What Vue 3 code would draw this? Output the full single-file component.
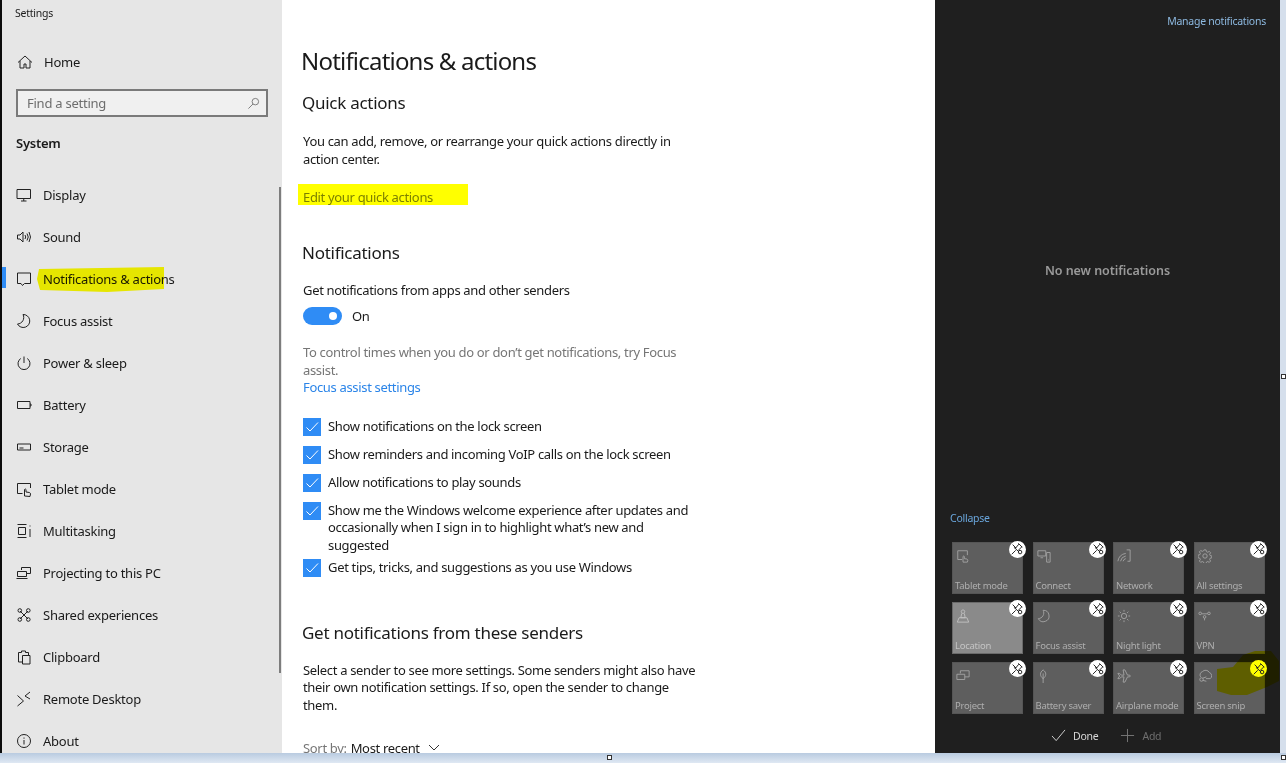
<script setup>
const navItems = [
  { label: 'Display', icon: 'display' },
  { label: 'Sound', icon: 'sound' },
  { label: 'Notifications & actions', icon: 'note', active: true },
  { label: 'Focus assist', icon: 'moon' },
  { label: 'Power & sleep', icon: 'power' },
  { label: 'Battery', icon: 'battery' },
  { label: 'Storage', icon: 'storage' },
  { label: 'Tablet mode', icon: 'tablet' },
  { label: 'Multitasking', icon: 'multi' },
  { label: 'Projecting to this PC', icon: 'project' },
  { label: 'Shared experiences', icon: 'shared' },
  { label: 'Clipboard', icon: 'clip' },
  { label: 'Remote Desktop', icon: 'remote' },
  { label: 'About', icon: 'about' },
]
const iconPaths = {
  display: 'M1 2.500h13.500v9H1zM5 14h5.500M7.750 11.500V14',
  sound: 'M1.500 6v4h2.500l3 3V3L4 6zM9 6q1.500 2 0 4M11 4.500q2.500 3.500 0 7M13 3q3 5 0 10',
  note: 'M1.500 2h13v10.500H8.500L6.500 14.500 5 12.500H1.500z',
  moon: 'M7 1.500A6.500 6.500 0 1 1 1.500 11 6.500 6.500 0 0 0 7 1.500z',
  power: 'M8 1.500V8M4.800 3.500a6 6 0 1 0 6.400 0',
  battery: 'M1.500 4.500h12.500v7H1.500zM14 7h1v2h-1',
  storage: 'M1.500 5h13v6h-13zM3.500 9h4',
  tablet: 'M14.500 7V2.500h-13v10h5M8.500 15V8.500q1-1 1.500 0V11l3.500.5q1 .5 1 1.500l-.5 2.500z',
  multi: 'M1.500 1.500h9M1.500 14.500h9M2.500 4.500h7v7h-7zM14 2.500v1M14 6v8',
  project: 'M5.500 5V2.500h9v6h-4M1.500 6.500h9v5h-9zM.5 13.500h11',
  shared: 'M4 4l8 8M12 4l-8 8M2 3.500a1.800 1.800 0 1 0 3.600 0 1.800 1.800 0 1 0-3.600 0M10.500 3.500a1.800 1.800 0 1 0 3.600 0 1.800 1.800 0 1 0-3.600 0M2 12.500a1.800 1.800 0 1 0 3.600 0 1.800 1.800 0 1 0-3.600 0M10.500 12.500a1.800 1.800 0 1 0 3.600 0 1.800 1.800 0 1 0-3.600 0',
  clip: 'M2.500 13V3.500h3V2h4v1.500h3V6M6.500 6.500h7.500v8.500H6.500zM2.500 13h4',
  remote: 'M1.500 4.500l6 5.500-6 5M14 1L9 5l5 3',
  about: 'M1.500 8a6.500 6.500 0 1 0 13 0 6.500 6.500 0 1 0-13 0M8 7v4.500M8 4.500v1.200',
}
const checks = [
  'Show notifications on the lock screen',
  'Show reminders and incoming VoIP calls on the lock screen',
  'Allow notifications to play sounds',
  'Show me the Windows welcome experience after updates and occasionally when I sign in to highlight what\u2019s new and suggested',
  'Get tips, tricks, and suggestions as you use Windows',
]
const tiles = [
  { label: 'Tablet mode', d: 'M13 7V2H2v10h5M8 15V8.500q1-1 1.500 0V11l3 .5q1 .5 1 1.500l-.5 2z' },
  { label: 'Connect', d: 'M1 2h9v6H1zM4 10h3M11 4h4v11h-4zM12.500 12.500h1' },
  { label: 'Network', d: 'M1 14a11 11 0 0 1 9-9M4 14a7.500 7.500 0 0 1 6-6M7 14a4 4 0 0 1 3-3M11 1h4v13h-3' },
  { label: 'All settings', d: 'M5.500 8a2.500 2.500 0 1 0 5 0 2.500 2.500 0 1 0-5 0M6.800 1h2.400l.4 2 1.500.7 1.800-1 1.500 1.600-1.100 1.700.6 1.500 2 .5v2l-2 .5-.6 1.500 1.100 1.700-1.500 1.600-1.800-1-1.500.7-.4 2H6.800l-.4-2-1.500-.7-1.800 1-1.500-1.600 1.100-1.700-.6-1.500-2-.5V7l2-.5.6-1.500-1.100-1.700 1.500-1.600 1.800 1 1.500-.7z' },
  { label: 'Location', bright: true, d: 'M8 1a2 2 0 1 0 .01 0M6.500 5L5.500 10h5L9.500 5M1.500 15L3.500 10H12.500L14.500 15z' },
  { label: 'Focus assist', d: 'M7 1.500A6.500 6.500 0 1 1 1.500 11 6.500 6.500 0 0 0 7 1.500z' },
  { label: 'Night light', d: 'M5 8a3 3 0 1 0 6 0 3 3 0 1 0-6 0M8 1v2M8 13v2M1 8h2M13 8h2M3 3l1.500 1.500M11.500 11.500L13 13M13 3l-1.500 1.500M3 13l1.500-1.500' },
  { label: 'VPN', d: 'M1 5a1.500 1.500 0 1 0 3 0 1.500 1.500 0 1 0-3 0M6 9a1.500 1.500 0 1 0 3 0 1.500 1.500 0 1 0-3 0M11 5a1.500 1.500 0 1 0 3 0 1.500 1.500 0 1 0-3 0M4 5.500h7M7.500 10.500V13' },
  { label: 'Project', d: 'M5 5V2h10v7h-5M1 6h9v6H1z' },
  { label: 'Battery saver', d: 'M7 1C3 4 3 8 7 11c4-3 4-7 0-10zM7 5v11' },
  { label: 'Airplane mode', d: 'M1 5l2 3-2 3h2l2-2h3l-1 6h2l3-6h2.500q1.500-1 0-2H12L9 1H7l1 6H5L3 5z' },
  { label: 'Screen snip', d: 'M3 9a4 4 0 0 1 2-6 5 5 0 0 1 8 1 4 4 0 0 1 1 7H9M2 12a2 2 0 1 0 4 0 2 2 0 1 0-4 0M5.500 10.500l4-1.500M5.500 13l4 1', pinYellow: true },
]
</script>

<template>
  <div class="screen">
    <div class="window">
      <aside class="sidebar">
        <div class="title">Settings</div>
        <div class="home">
          <svg class="ico" viewBox="0 0 16 16"><path d="M1 8.500L8 2l7 6.500M3 7v7h4v-4h2v4h4V7" /></svg>
          <span>Home</span>
        </div>
        <div class="search">
          <span>Find a setting</span>
          <svg class="mag" viewBox="0 0 14 14"><path d="M5.500 5a3.500 3.500 0 1 0 7 0 3.500 3.500 0 1 0-7 0M6.500 7.500L1.500 12.500" /></svg>
        </div>
        <div class="group">System</div>
        <nav class="nav">
          <div v-for="item in navItems" :key="item.label" class="row" :class="{ active: item.active }">
            <svg class="ico" viewBox="0 0 16 16"><path :d="iconPaths[item.icon]" /></svg>
            <span>{{ item.label }}</span>
            <svg v-if="item.active" class="mark mark-nav" viewBox="0 0 127 25" preserveAspectRatio="none"><path d="M2 2L127 0V22L70 25 3 23 0 12z" /></svg>
          </div>
        </nav>
        <div class="thumb"></div>
      </aside>

      <main class="content">
        <h1>Notifications &amp; actions</h1>
        <h2 class="first">Quick actions</h2>
        <p class="body">You can add, remove, or rearrange your quick actions directly in action center.</p>
        <div class="edit">Edit your quick actions</div>

        <h2 class="notif">Notifications</h2>
        <p class="get">Get notifications from apps and other senders</p>
        <div class="toggle-row">
          <span class="toggle"><i></i></span>
          <span>On</span>
        </div>
        <p class="muted">To control times when you do or don’t get notifications, try Focus assist.</p>
        <div class="link">Focus assist settings</div>
        <ul class="checks">
          <li v-for="c in checks" :key="c">
            <span class="box"><svg viewBox="0 0 18 18"><path d="M3.500 9.500l3.500 3.500 8-8.500" /></svg></span>
            <span class="check-label">{{ c }}</span>
          </li>
        </ul>
        <h2 class="senders">Get notifications from these senders</h2>
        <p class="body sender-copy">Select a sender to see more settings. Some senders might also have their own notification settings. If so, open the sender to change them.</p>
        <div class="sort">
          <span class="sort-key">Sort by:</span>
          <span>Most recent</span>
          <svg viewBox="0 0 12 8"><path d="M1 1l5 5 5-5" /></svg>
        </div>
      </main>

      <section class="panel">
        <div class="manage">Manage notifications</div>
        <div class="empty">No new notifications</div>
        <div class="collapse">Collapse</div>
        <div class="tiles">
          <div v-for="t in tiles" :key="t.label" class="tile" :class="{ bright: t.bright }">
            <svg class="tile-ico" viewBox="0 0 16 16"><path :d="t.d" /></svg>
            <span class="tile-label">{{ t.label }}</span>
            <svg v-if="t.pinYellow" class="mark mark-snip" viewBox="0 0 62 50"><path d="M0 18L16 16 26 4 38 0 54 0 62 10V30L50 36 30 44H14L0 40z" /></svg>
            <span class="pin" :class="{ yellow: t.pinYellow }">
              <svg viewBox="0 0 16 16"><path d="M2 14L6.500 9.500M4.500 6L10.500 11.500M6 7.500L10 2.500M9.500 1.500L14 6M13.500 5.500L9.500 9.500M3 3L7 7M9.500 11.500a2 2 0 1 0 4 0 2 2 0 1 0-4 0" /></svg>
            </span>
          </div>
        </div>
        <div class="actions">
          <span class="done"><svg viewBox="0 0 16 14"><path d="M1 7.500l4.500 5L15 1" /></svg>Done</span>
          <span class="add"><svg viewBox="0 0 16 16"><path d="M8 1v14M1 8h14" /></svg>Add</span>
        </div>
      </section>
      <div class="edge"></div>
    </div>
    <div class="taskbar"></div>
    <i class="handle h-right"></i>
    <i class="handle h-bottom"></i>
    <i class="handle h-corner"></i>
  </div>
</template>

<style>
html, body { margin: 0; background: #fff; }
</style>

<style scoped>
.screen {
  position: relative;
  width: 1286px;
  height: 763px;
  overflow: hidden;
  font-family: "Noto Sans", "Open Sans", sans-serif;
  font-size: 13px;
  letter-spacing: -0.25px;
  color: #1a1a1a;
  background: #fff;
}
.window {
  display: flex;
  height: 753px;
  overflow: hidden;
}
.sidebar {
  position: relative;
  box-sizing: border-box;
  width: 282px;
  flex: none;
  border-left: 2px solid #0c0c0c;
  background: #e6e6e6;
}
.title {
  padding: 6px 0 0 13px;
  height: 35px;
  font-size: 10.5px;
  line-height: 14px;
}
.home {
  display: flex;
  align-items: center;
  height: 42px;
  padding-left: 15px;
  gap: 11px;
}
.ico {
  width: 16px;
  height: 16px;
  flex: none;
  fill: none;
  stroke: #222;
  stroke-width: 1;
}
.search {
  box-sizing: border-box;
  display: flex;
  align-items: center;
  justify-content: space-between;
  width: 252px;
  height: 28px;
  margin: 6px 0 0 14px;
  padding: 0 6px 0 9px;
  border: 2px solid #7a7a7a;
  background: #f0f0f0;
  color: #6d6d6d;
}
.mag {
  width: 13px;
  height: 13px;
  fill: none;
  stroke: #777;
  stroke-width: 1;
}
.group {
  margin: 15px 0 0 14px;
  height: 42px;
  font-weight: 600;
  line-height: 22px;
}
.row {
  position: relative;
  display: flex;
  align-items: center;
  height: 42px;
  padding-left: 14px;
  gap: 11px;
}
.row.active::before {
  content: "";
  position: absolute;
  left: 0;
  top: 9px;
  width: 4px;
  height: 21px;
  background: #2f8cf5;
}
.mark {
  position: absolute;
  pointer-events: none;
  mix-blend-mode: multiply;
}
.mark path { fill: #ffff00; }
.mark-nav {
  left: 35px;
  top: 9px;
  width: 127px;
  height: 25px;
}
.thumb {
  position: absolute;
  right: 1px;
  top: 187px;
  width: 2px;
  height: 486px;
  background: #7d7d7d;
}
.content {
  box-sizing: border-box;
  width: 653px;
  flex: none;
  padding: 0 0 0 21px;
  background: #fff;
  letter-spacing: -0.33px;
}
h1 {
  margin: 43px 0 0 -2px;
  font-size: 24px;
  line-height: 36px;
  font-weight: 400;
  letter-spacing: -0.8px;
}
h2 {
  margin: 0;
  font-size: 17px;
  line-height: 24px;
  font-weight: 400;
  letter-spacing: -0.27px;
}
h2.first { margin-top: 12px; margin-left: -1px; }
p { margin: 0; line-height: 17.5px; }
.body { width: 395px; }
.first + .body { margin-top: 18px; }
.edit {
  box-sizing: border-box;
  width: 170px;
  height: 20.5px;
  margin: 16px 0 0 -5px;
  padding-left: 5px;
  line-height: 26px;
  background: #ffff00;
  color: #7c8000;
  overflow: hidden;
}
h2.notif { margin-top: 36.500px; margin-left: -1px; }
.get { margin-top: 16px; line-height: 18px; }
.toggle-row {
  display: flex;
  align-items: center;
  gap: 10px;
  height: 20px;
  margin-top: 7px;
}
.toggle {
  position: relative;
  width: 39px;
  height: 18px;
  border-radius: 9px;
  background: #2f8cf5;
}
.toggle i {
  position: absolute;
  right: 5px;
  top: 5px;
  width: 8px;
  height: 8px;
  border-radius: 50%;
  background: #fff;
}
.muted { margin-top: 18px; width: 395px; color: #767676; }
.link { color: #2a84e8; line-height: 17.5px; }
.checks { list-style: none; margin: 21px 0 0; padding: 0; }
.checks li {
  display: flex;
  gap: 7px;
  min-height: 18px;
  margin-bottom: 10px;
}
.checks li:nth-child(4) { margin-bottom: 5px; }
.box {
  width: 18px;
  height: 18px;
  flex: none;
  background: #2f8cf5;
}
.box svg {
  display: block;
  fill: none;
  stroke: #fff;
  stroke-width: 1;
}
.check-label { width: 365px; line-height: 17.5px; }
h2.senders { margin-top: 43.500px; margin-left: -1px; }
.sender-copy { margin-top: 17px; }
.sort {
  margin-top: 24.500px;
  display: flex;
  align-items: center;
  gap: 4px;
  line-height: 18px;
}
.sort-key { color: #767676; }
.sort svg {
  width: 12px;
  height: 8px;
  margin-left: 4px;
  fill: none;
  stroke: #333;
}
.panel {
  box-sizing: border-box;
  width: 345px;
  flex: none;
  display: flex;
  flex-direction: column;
  background: #1f1f1f;
  color: #aaa;
}
.manage {
  align-self: flex-end;
  margin: 12px 14px 0 0;
  line-height: 18px;
  font-size: 10.5px;
  color: #8db9e0;
}
.empty {
  margin-top: 232px;
  text-align: center;
  font-size: 12.5px;
  font-weight: 600;
  line-height: 18px;
  letter-spacing: -0.05px;
  color: #9a9a9a;
}
.collapse {
  margin: 230px 0 0 15px;
  line-height: 16px;
  font-size: 10.5px;
  color: #6aa6dc;
}
.tiles {
  display: grid;
  grid-template-columns: repeat(4, 71px);
  grid-auto-rows: 52px;
  gap: 7.700px 9.500px;
  margin: 16.300px 0 0 17px;
}
.tile {
  position: relative;
  box-sizing: border-box;
  border: 1px solid #555;
  background: #5e5e5e;
}
.tile.bright { background: #8a8a8a; border-color: #6a6a6a; }
.tile-ico {
  position: absolute;
  left: 3px;
  top: 6px;
  width: 14px;
  height: 14px;
  fill: none;
  stroke: #a6a6a6;
  stroke-width: 1;
}
.bright .tile-ico { stroke: #c4c4c4; }
.tile-label {
  position: absolute;
  left: 2px;
  bottom: 0;
  font-size: 9.500px;
  line-height: 14px;
  color: #aeaeae;
  white-space: nowrap;
}
.bright .tile-label { color: #c4c4c4; }
.pin {
  position: absolute;
  right: -3.500px;
  top: -2.500px;
  box-sizing: border-box;
  width: 17px;
  height: 17px;
  padding: 1.500px;
  border-radius: 50%;
  background: #fff;
}
.pin.yellow { background: #ffff00; }
.pin svg {
  display: block;
  width: 14px;
  height: 14px;
  fill: none;
  stroke: #222;
  stroke-width: 1.100;
}
.mark-snip {
  left: 22px;
  top: -12px;
  width: 62px;
  height: 50px;
}
.actions {
  display: flex;
  margin: 13px 0 0 116px;
  gap: 22px;
  font-size: 10.5px;
  line-height: 18px;
}
.actions span { display: flex; align-items: center; gap: 7px; }
.actions svg { fill: none; stroke-width: 1; }
.done { color: #d8d8d8; }
.done svg { width: 15px; height: 13px; stroke: #d8d8d8; }
.add { color: #6e6e6e; }
.add svg { width: 15px; height: 15px; stroke: #777; }
.edge {
  flex: 1;
  background: #d5dfec;
}
.taskbar {
  height: 10px;
  background: linear-gradient(#b9cbe0, #dfe8f3);
}
.handle {
  position: absolute;
  box-sizing: border-box;
  width: 5px;
  height: 5px;
  background: #fff;
  border: 1px solid #333;
}
.h-right { left: 1281px; top: 374px; }
.h-bottom { left: 607px; top: 755px; }
.h-corner { left: 1281px; top: 755px; }
</style>
